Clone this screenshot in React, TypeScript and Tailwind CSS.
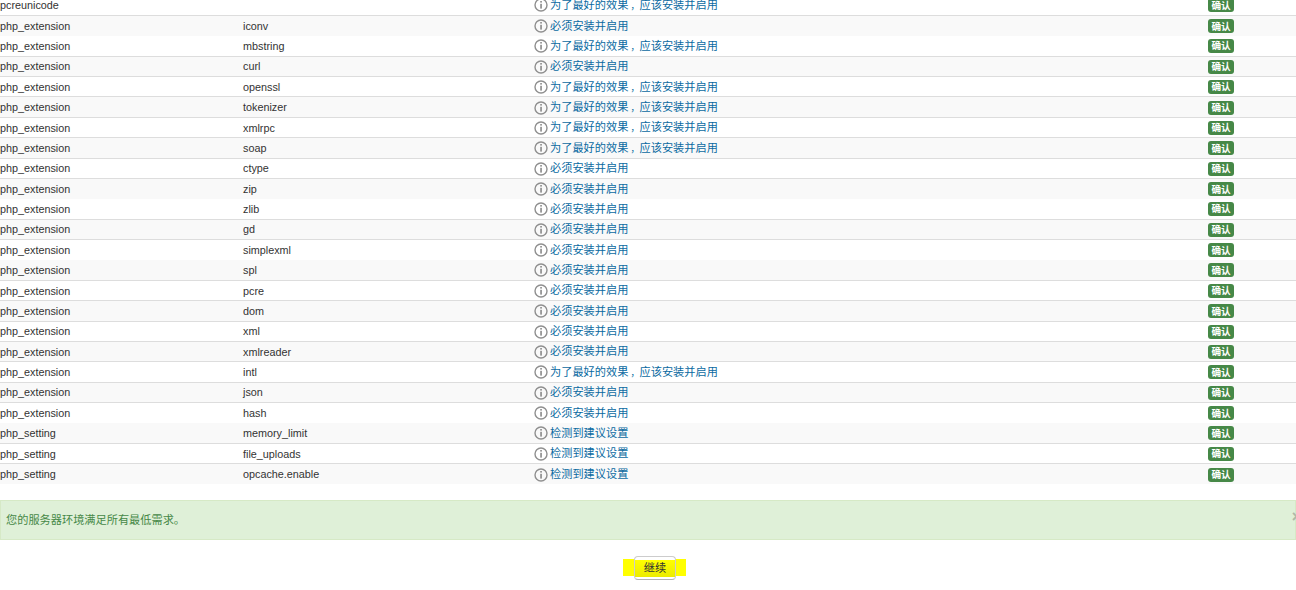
const A = "为了最好的效果，应该安装并启用";
const M = "必须安装并启用";
const S = "检测到建议设置";
const rows: [string, string, string][] = [
  ["pcreunicode", "", A],
  ["php_extension", "iconv", M],
  ["php_extension", "mbstring", A],
  ["php_extension", "curl", M],
  ["php_extension", "openssl", A],
  ["php_extension", "tokenizer", A],
  ["php_extension", "xmlrpc", A],
  ["php_extension", "soap", A],
  ["php_extension", "ctype", M],
  ["php_extension", "zip", M],
  ["php_extension", "zlib", M],
  ["php_extension", "gd", M],
  ["php_extension", "simplexml", M],
  ["php_extension", "spl", M],
  ["php_extension", "pcre", M],
  ["php_extension", "dom", M],
  ["php_extension", "xml", M],
  ["php_extension", "xmlreader", M],
  ["php_extension", "intl", A],
  ["php_extension", "json", M],
  ["php_extension", "hash", M],
  ["php_setting", "memory_limit", S],
  ["php_setting", "file_uploads", S],
  ["php_setting", "opcache.enable", S],
];

const noLine = [0, 2, 10, 13, 21];

function InfoIcon() {
  return (
    <svg width="14" height="14" viewBox="0 0 14 14" className="shrink-0" fill="none">
      <circle cx="7" cy="7" r="6" stroke="#8f8f8f" strokeWidth="1.4" />
      <rect x="6.3" y="3" width="1.5" height="1.6" fill="#808080" />
      <rect x="6.3" y="5.8" width="1.5" height="4.8" fill="#808080" />
    </svg>
  );
}

function Note({ text }: { text: string }) {
  const parts = text.split("，");
  if (parts.length < 2) return <span>{text}</span>;
  return (
    <span>
      {parts[0]}
      <span className="inline-block w-[11.2px] pl-[2.2px] text-[9px]">，</span>
      {parts[1]}
    </span>
  );
}

export default function App() {
  return (
    <div className="h-[590px] w-[1296px] overflow-hidden bg-white font-['Liberation_Sans','Noto_Sans_CJK_SC',sans-serif] text-[#333]">
      <table className="-mt-[5px] w-full table-fixed border-collapse">
        <colgroup>
          <col className="w-[243px]" />
          <col className="w-[291px]" />
          <col className="w-[674px]" />
          <col className="w-[88px]" />
        </colgroup>
        <tbody>
          {rows.map(([type, name, note], i) => {
            const line = noLine.includes(i) ? "border-t-0" : "border-t border-[#ddd]";
            return (
              <tr key={i} className={`h-[20.39px] ${i % 2 === 1 ? "bg-[#f9f9f9]" : "bg-white"}`}>
                <td className={`${line} p-0 pt-[1px] align-middle text-[10.8px] leading-none`}>{type}</td>
                <td className={`${line} p-0 pt-[1px] align-middle text-[10.8px] leading-none`}>{name}</td>
                <td className={`${line} p-0 pt-[1px] align-middle`}>
                  <div className="flex items-center gap-[2px] text-[11.2px] leading-none text-[#0a6aa1]">
                    <InfoIcon />
                    <Note text={note} />
                  </div>
                </td>
                <td className={`${line} p-0 pt-[1px] align-middle`}>
                  <span className="flex h-[14px] w-[26px] items-center justify-center rounded-[3px] bg-[#468847] text-[9.6px] font-bold leading-none text-white">
                    确认
                  </span>
                </td>
              </tr>
            );
          })}
        </tbody>
      </table>

      <div className="relative mt-[15.8px] flex h-[40px] items-center border border-[#d6e9c6] bg-[#dff0d8] pl-[5px] pt-[2px] text-[11.2px] text-[#468847]">
        您的服务器环境满足所有最低需求。
        <span className="absolute right-[-6px] top-[8px] text-[16px] font-bold leading-none text-[#b0b8a8]">×</span>
      </div>

      <div className="mt-[16px] flex justify-center pl-[13px]">
        <div className="flex h-[24px] items-center">
          <div className="flex h-[17px] items-center bg-[#ffff00] pl-[11px] pr-[10px]">
            <button className="flex h-[24px] w-[42px] items-center justify-center rounded-[4px] border border-[#ccc] border-b-[#b3b3b3] bg-[linear-gradient(to_bottom,#ffffff_0,#ffffff_3px,#ffff00_3px,#ecec00_20px,#ffffff_20px)] pt-[2px] text-[11.2px] text-[#333]">
              继续
            </button>
          </div>
        </div>
      </div>
    </div>
  );
}
